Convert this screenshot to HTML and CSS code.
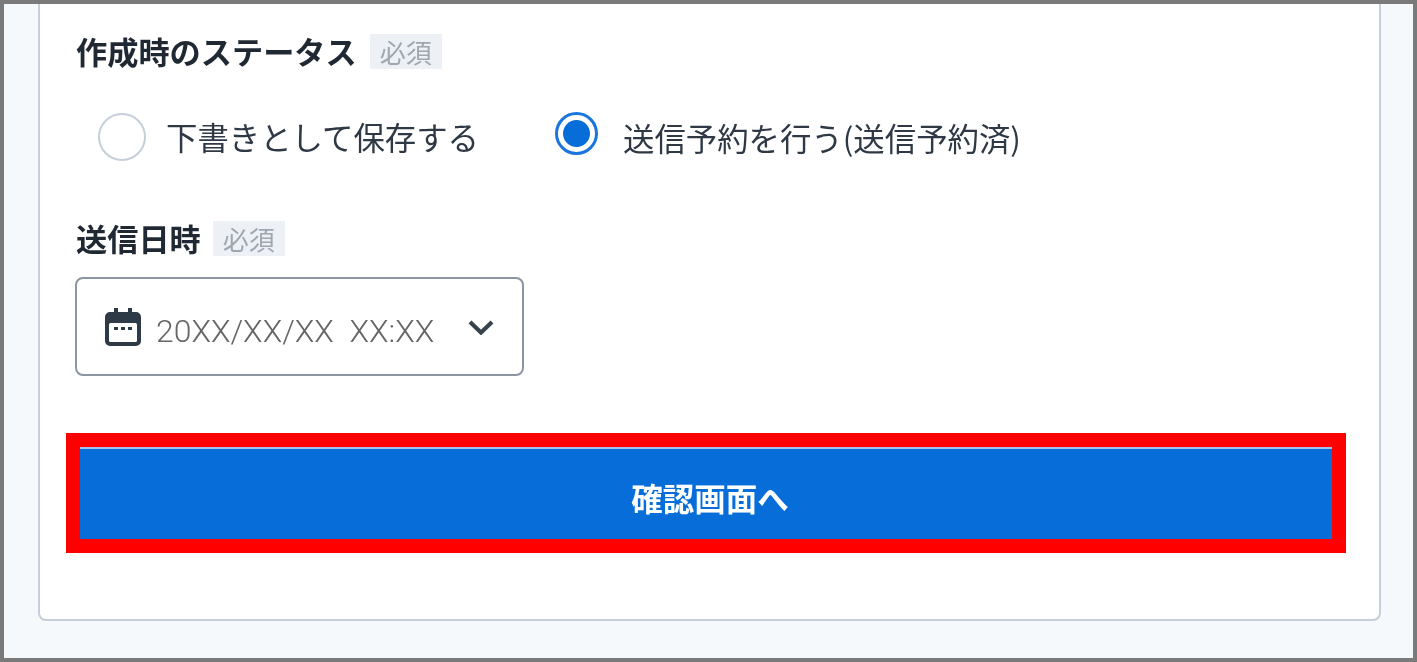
FILE: index.html
```html
<!DOCTYPE html>
<html lang="ja">
<head>
<meta charset="UTF-8" />
<meta name="viewport" content="width=device-width, initial-scale=1" />
<title>確認画面へ</title>
<link rel="stylesheet" href="styles.css">
</head>
<body>
  <div class="frame">
    <form class="card">
      <div class="field-label status-label">
        <span class="label-text">作成時のステータス</span>
        <span class="required"><span class="soft">必須</span></span>
      </div>
      <div class="radios">
        <label class="radio-item draft">
          <span class="radio"></span>
          <span class="radio-text">下書きとして保存する</span>
        </label>
        <label class="radio-item scheduled">
          <span class="radio checked"></span>
          <span class="radio-text">送信予約を行う(送信予約済)</span>
        </label>
      </div>
      <div class="field-label date-label">
        <span class="label-text">送信日時</span>
        <span class="required"><span class="soft">必須</span></span>
      </div>
      <div class="date-select">
        <svg class="calendar" viewBox="0 0 36 38" width="36" height="38">
          <path d="M9 0h4v4h10V0h4v4h4a5 5 0 0 1 5 5v24a5 5 0 0 1-5 5H5a5 5 0 0 1-5-5V9a5 5 0 0 1 5-5h4z" fill="#2f3a47"/>
          <rect x="4" y="15" width="28" height="19" rx="1.5" fill="#fff"/>
          <rect x="9" y="19" width="4" height="3" fill="#2f3a47"/>
          <rect x="16" y="19" width="4" height="3" fill="#2f3a47"/>
          <rect x="23" y="19" width="4" height="3" fill="#2f3a47"/>
        </svg>
        <span class="date-value">20XX/XX/XX&nbsp; XX:XX</span>
        <svg class="chevron" viewBox="0 0 26 16" width="26" height="16">
          <path d="M2 3l11 10.500L24 3" fill="none" stroke="#39434f" stroke-width="4.200"/>
        </svg>
      </div>
      <div class="highlight">
        <button type="button" class="submit"><span class="soft">確認画面へ</span></button>
      </div>
    </form>
  </div>
</body>
</html>
```

FILE: styles.css
```css
* {
  box-sizing: border-box;
}

body {
  margin: 0;
  font-family: "Noto Sans CJK JP", "Noto Sans", sans-serif;
  background: #fff;
}

.frame {
  width: 1417px;
  height: 662px;
  border: 4px solid #7a7a7a;
  background-color: #f5f9fc;
  padding: 0 32px 37px 34px;
  overflow: hidden;
}

.card {
  height: 100%;
  background-color: #fff;
  border: 2px solid #c6cfd9;
  border-top: none;
  border-radius: 0 0 8px 8px;
  padding: 29px 33px 0 28px;
}

/* the reference is an upscaled capture, text is slightly soft */
.soft,
.label-text,
.radio-text,
.date-value {
  display: inline-block;
  filter: blur(0.6px);
}

.field-label {
  display: flex;
  align-items: center;
  height: 36px;
  margin-left: 8px;
}

.label-text {
  font-size: 31.200px;
  font-weight: 700;
  line-height: 36px;
  color: #1f2833;
}

.required {
  width: 72px;
  height: 35px;
  margin-left: 13px;
  background-color: #edf1f6;
  color: #9ea6b0;
  font-size: 26px;
  line-height: 35px;
  text-align: center;
}

.date-label .required {
  margin-left: 12px;
}

.radios {
  display: flex;
  align-items: center;
  height: 151px;
  padding-bottom: 15px;
}

.radio-item {
  display: flex;
  align-items: center;
}

.draft {
  margin-left: 30px;
  width: 457px;
}

.radio {
  flex: none;
  width: 48px;
  height: 48px;
  border: 2px solid #c6cfd9;
  border-radius: 50%;
  background-color: #fff;
  margin-right: 20px;
}

.radio.checked {
  width: 43px;
  height: 43px;
  margin-top: -8px;
  margin-right: 25px;
  border: 3px solid #1a76dc;
  padding: 5px;
  background-clip: content-box;
  background-color: #066dd9;
}

.radio-text {
  font-size: 31.400px;
  line-height: 40px;
  color: #2f3945;
  white-space: nowrap;
}

.scheduled .radio-text {
  margin-top: 2px;
}

.date-select {
  display: flex;
  align-items: center;
  width: 449px;
  height: 99px;
  margin: 21px 0 0 7px;
  padding: 0 28px 0 28px;
  border: 2px solid #8c96a3;
  border-radius: 8px;
}

.calendar {
  flex: none;
}

.date-value {
  flex: 1;
  margin: 8px 0 0 15px;
  font-family: Roboto, sans-serif;
  font-weight: 300;
  font-size: 31.900px;
  color: #666;
  white-space: nowrap;
}

.chevron {
  flex: none;
}

.highlight {
  margin: 57px 0 0 -2px;
  width: 1280px;
  height: 120px;
  border: 14px solid #f00;
}

.submit {
  display: block;
  width: 100%;
  height: 100%;
  padding: 6px 0 0 8px;
  border: none;
  border-top: 2px solid #a3c3ee;
  background-color: #066dd9;
  color: #fff;
  font-family: inherit;
  font-size: 31.500px;
  font-weight: 700;
}
```
